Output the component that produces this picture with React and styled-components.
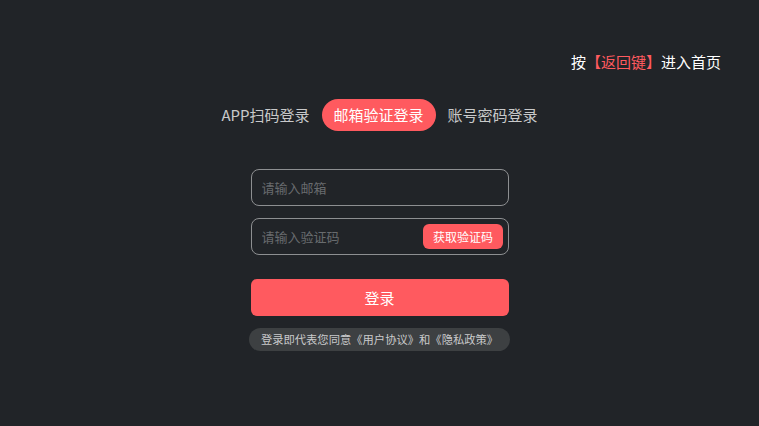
import React, { useState } from 'react';
import styled, { createGlobalStyle } from 'styled-components';

const GlobalStyle = createGlobalStyle`
  html, body {
    margin: 0;
    padding: 0;
    background: #212428;
    font-family: "Noto Sans CJK SC", "Noto Sans", sans-serif;
  }
`;

const Page = styled.div`
  width: 759px;
  height: 426px;
  background: #212428;
  display: flex;
  flex-direction: column;
  box-sizing: border-box;
  padding-top: 50px;
`;

const Hint = styled.div`
  align-self: flex-end;
  margin-right: 38px;
  font-size: 15px;
  line-height: 24px;
  color: #fff;
`;

const Red = styled.span`
  color: #ff5a5f;
`;

const Tabs = styled.div`
  display: flex;
  justify-content: center;
  align-items: center;
  margin-top: 25px;
`;

const Tab = styled.div`
  height: 32px;
  line-height: 32px;
  padding: 0 12px;
  border-radius: 16px;
  font-size: 15px;
  color: ${p => (p.$active ? '#fff' : '#c8c9ca')};
  background: ${p => (p.$active ? '#ff5a5f' : 'transparent')};
`;

const Form = styled.div`
  width: 258px;
  margin: 38px auto 0;
  display: flex;
  flex-direction: column;
`;

const Field = styled.div`
  height: 37px;
  box-sizing: border-box;
  border: 1px solid #8d8f91;
  border-radius: 8px;
  display: flex;
  align-items: center;
  padding: 0 5px 0 10px;
  margin-bottom: 12px;
`;

const Input = styled.input`
  flex: 1;
  min-width: 0;
  padding: 0;
  background: transparent;
  border: none;
  outline: none;
  font-family: inherit;
  font-size: 13px;
  color: #fff;
  &::placeholder {
    color: #686b6e;
  }
`;

const CodeButton = styled.button`
  height: 25px;
  padding: 0 9.5px;
  border: none;
  border-radius: 6px;
  background: #ff5a5f;
  color: #fff;
  font-family: inherit;
  font-size: 12px;
`;

const LoginButton = styled.button`
  margin-top: 12px;
  height: 37px;
  border: none;
  border-radius: 6px;
  background: #ff5a5f;
  color: #fff;
  font-family: inherit;
  font-size: 15px;
`;

const Agreement = styled.div`
  align-self: center;
  margin-top: 12px;
  height: 23px;
  line-height: 23px;
  padding: 0 12px;
  border-radius: 12px;
  background: #3d4042;
  color: #c9cacb;
  font-size: 11.3px;
  white-space: nowrap;
`;

export default function App() {
  const [tab, setTab] = useState(1);
  const tabs = ['APP扫码登录', '邮箱验证登录', '账号密码登录'];
  return (
    <Page>
      <GlobalStyle />
      <Hint>
        按<Red>【返回键】</Red>进入首页
      </Hint>
      <Tabs>
        {tabs.map((t, i) => (
          <Tab key={t} $active={i === tab} onClick={() => setTab(i)}>
            {t}
          </Tab>
        ))}
      </Tabs>
      <Form>
        <Field>
          <Input placeholder="请输入邮箱" />
        </Field>
        <Field>
          <Input placeholder="请输入验证码" />
          <CodeButton>获取验证码</CodeButton>
        </Field>
        <LoginButton>登录</LoginButton>
        <Agreement>登录即代表您同意《用户协议》和《隐私政策》</Agreement>
      </Form>
    </Page>
  );
}
